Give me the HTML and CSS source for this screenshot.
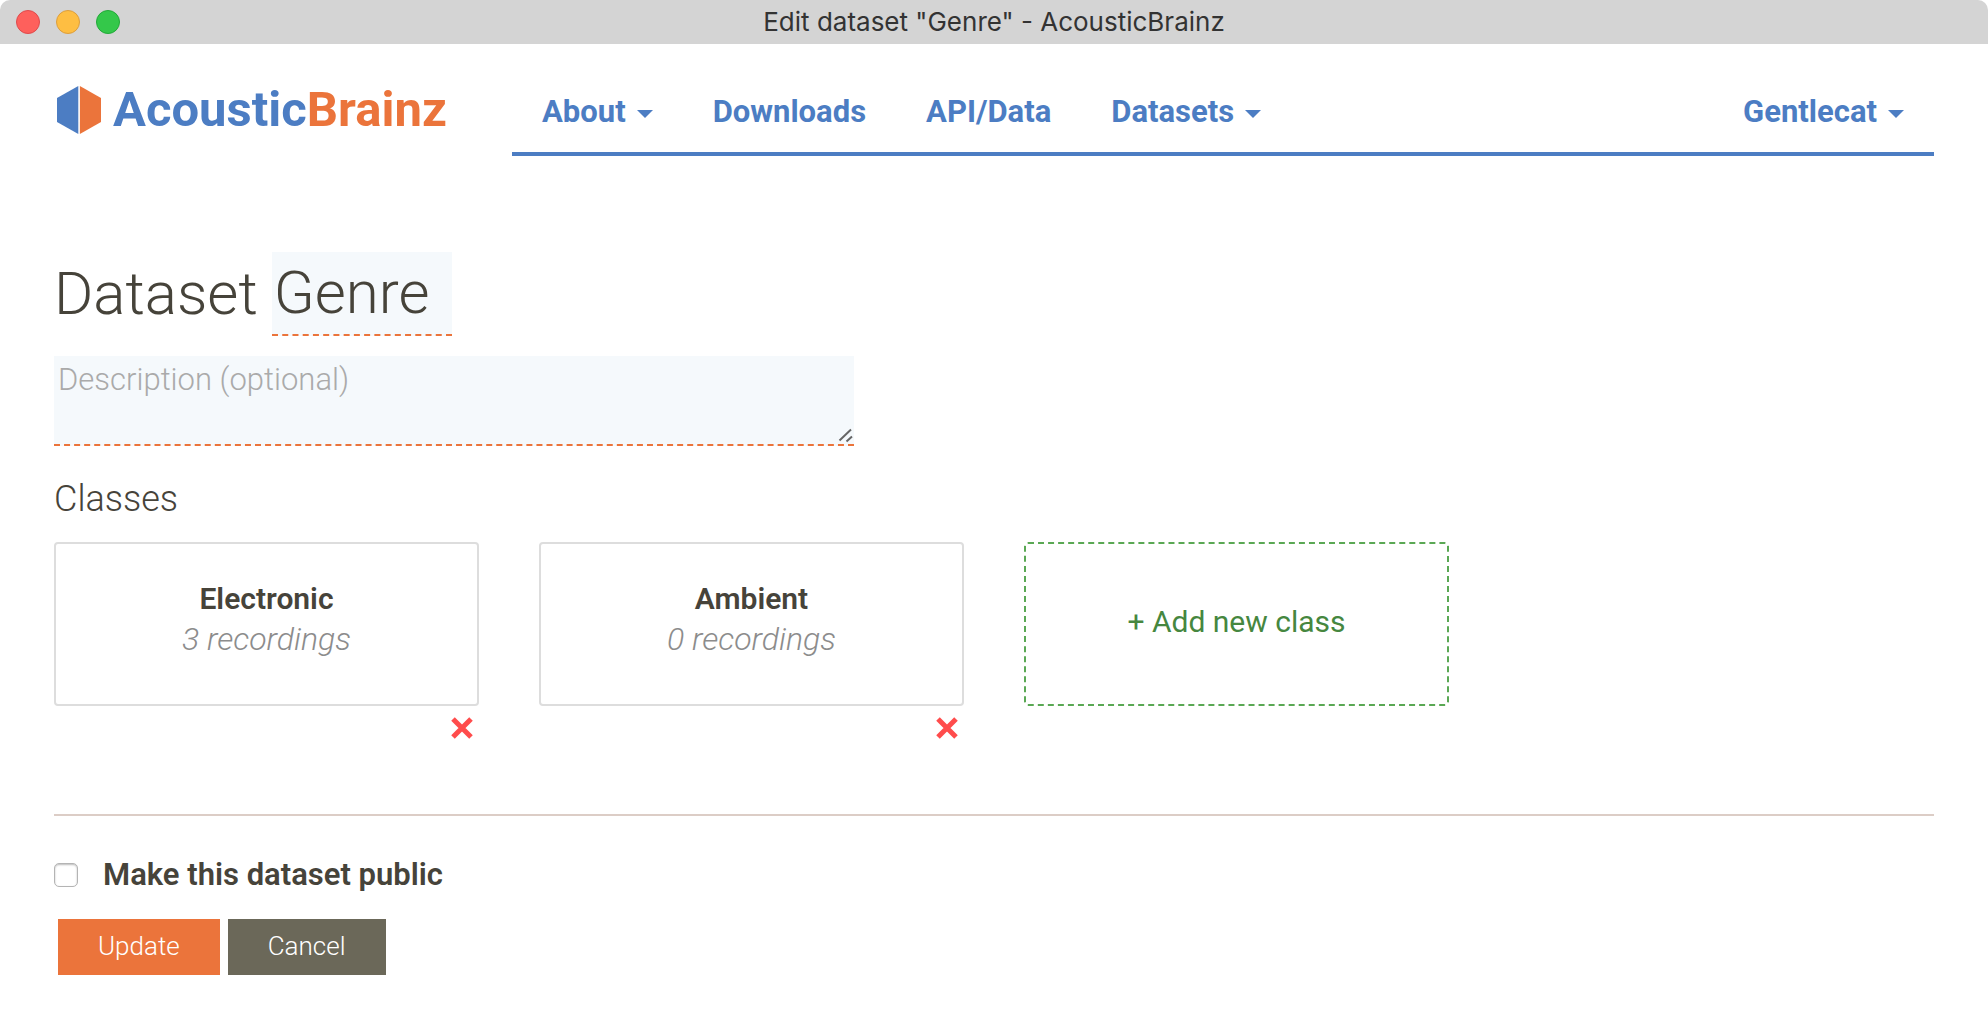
FILE: index.html
```html
<!DOCTYPE html>
<html lang="en">
<head>
<meta charset="utf-8">
<title>Edit dataset "Genre" - AcousticBrainz</title>
<link rel="stylesheet" href="styles.css">
</head>
<body>
<div class="titlebar">
  <div class="lights">
    <span class="light light-close"></span>
    <span class="light light-minimize"></span>
    <span class="light light-zoom"></span>
  </div>
  <div class="window-title">Edit dataset "Genre" - AcousticBrainz</div>
</div>

<div class="page">
  <header class="header">
    <a class="brand" href="#">
      <svg class="brand-mark" viewBox="0 0 44 48" aria-hidden="true">
        <path class="mark-blue" d="M21.3 0V48L0 36V12Z"/>
        <path class="mark-orange" d="M22.9 0V48L44 36V12Z"/>
      </svg>
      <span class="brand-name">Acoustic<span class="brand-accent">Brainz</span></span>
    </a>
    <nav class="nav">
      <a class="nav-link" href="#">About <span class="caret"></span></a>
      <a class="nav-link" href="#">Downloads</a>
      <a class="nav-link" href="#">API/Data</a>
      <a class="nav-link" href="#">Datasets <span class="caret"></span></a>
      <a class="nav-link nav-user" href="#">Gentlecat <span class="caret"></span></a>
    </nav>
  </header>

  <form class="editor">
    <h1 class="heading">
      <label for="name">Dataset</label>
      <input class="name-input" id="name" type="text" value="Genre">
    </h1>
    <div class="description-field">
      <textarea class="description" aria-label="Description" placeholder="Description (optional)"></textarea>
      <svg class="grip" viewBox="0 0 16 16" aria-hidden="true"><path d="M1.5 12.5L13 1.5M8.5 13.5L14 8.5"/></svg>
    </div>

    <h2 class="subheading">Classes</h2>
    <div class="classes">
      <div class="class">
        <a class="class-card" href="#">
          <span class="class-name">Electronic</span>
          <span class="class-count">3 recordings</span>
        </a>
        <button class="remove" type="button" aria-label="Remove Electronic">
          <svg class="remove-icon" viewBox="0 0 22 22"><path d="M2 2L20 20M20 2L2 20"/></svg>
        </button>
      </div>
      <div class="class">
        <a class="class-card" href="#">
          <span class="class-name">Ambient</span>
          <span class="class-count">0 recordings</span>
        </a>
        <button class="remove" type="button" aria-label="Remove Ambient">
          <svg class="remove-icon" viewBox="0 0 22 22"><path d="M2 2L20 20M20 2L2 20"/></svg>
        </button>
      </div>
      <div class="class">
        <button class="class-card class-add" type="button">+ Add new class</button>
      </div>
    </div>

    <hr class="divider">

    <label class="public"><input class="checkbox" type="checkbox">Make this dataset public</label>
    <div class="actions">
      <button class="button button-primary" type="submit">Update</button>
      <button class="button button-cancel" type="button">Cancel</button>
    </div>
  </form>
</div>
</body>
</html>
```

FILE: styles.css
```css
* {
  box-sizing: border-box;
}

body {
  margin: 0;
  background: #fff;
  color: #46433a;
  font: 300 31px/40px Roboto, "Liberation Sans", sans-serif;
}

a {
  color: inherit;
  text-decoration: none;
}

/* Window title bar */
.titlebar {
  display: grid;
  grid-template-columns: 1fr auto 1fr;
  align-items: center;
  height: 44px;
  padding: 0 16px;
  border-radius: 10px 10px 0 0;
  background: #d4d4d4;
}

.lights {
  display: flex;
  gap: 16px;
}

.light {
  width: 24px;
  height: 24px;
  border: 1px solid;
  border-radius: 50%;
}

.light-close {
  border-color: #e04a4c;
  background: #fe605c;
}

.light-minimize {
  border-color: #dd9e3c;
  background: #febe42;
}

.light-zoom {
  border-color: #22a938;
  background: #34c84a;
}

.window-title {
  color: #333;
  font: 400 26px/44px Inter, sans-serif;
}

/* Header */
.page {
  padding: 0 54px;
}

.header {
  display: grid;
  grid-template-columns: 458px 1fr;
  height: 112px;
}

.brand {
  display: flex;
  align-items: center;
  gap: 12px;
  height: 48px;
  margin: 42px 0 0 3px;
  color: #4c7dc3;
  font-size: 49px;
  font-weight: 700;
}

.brand-mark {
  width: 44px;
  height: 48px;
}

.mark-blue {
  fill: #4c7dc3;
}

.mark-orange {
  fill: #eb743b;
}

.brand-accent {
  color: #eb743b;
}

.nav {
  display: flex;
  gap: 60px;
  padding: 48px 30px 0;
  border-bottom: 4px solid #4c7dc3;
  color: #4c7dc3;
  font-weight: 700;
}

.nav-link {
  display: flex;
  align-items: center;
  gap: 11px;
  height: 40px;
}

.nav-user {
  margin-left: auto;
}

.caret {
  margin-top: 4px;
  border: 8px solid transparent;
  border-top-color: currentColor;
  border-bottom: 0;
}

/* Dataset fields */
.heading {
  display: flex;
  align-items: center;
  gap: 14px;
  height: 84px;
  margin: 96px 0 20px;
  font-size: 60px;
  font-weight: 300;
}

.name-input,
.description {
  border: 0;
  border-bottom: 2px dashed #eb743b;
  border-radius: 0;
  outline: 0;
  background: #f5f9fc;
  color: inherit;
  font: inherit;
}

.name-input {
  width: 180px;
  height: 84px;
  padding: 0 2px 2px;
}

.description-field {
  position: relative;
  width: fit-content;
  max-width: 100%;
}

.description {
  display: block;
  width: 800px;
  max-width: 100%;
  height: 90px;
  padding: 4px;
}

.description::placeholder {
  color: #aaa;
}

.description::-webkit-resizer {
  display: none;
}

.grip {
  position: absolute;
  right: 0;
  bottom: 2px;
  width: 16px;
  height: 16px;
  fill: none;
  stroke: #666;
  stroke-width: 2;
  pointer-events: none;
}

.subheading {
  margin: 32px 0 22px;
  font-size: 36px;
  font-weight: 300;
  line-height: 42px;
}

/* Class cards */
.classes {
  display: grid;
  grid-template-columns: repeat(4, 1fr);
  gap: 60px;
}

.class {
  display: flex;
  flex-direction: column;
  height: 212px;
}

.class-card {
  display: flex;
  flex-direction: column;
  align-items: center;
  height: 164px;
  padding-top: 35px;
  border: 2px solid #ddd;
  border-radius: 4px;
}

.class-name {
  font-size: 30px;
  font-weight: 600;
}

.class-count {
  color: #8c8c8c;
  font-size: 32px;
  font-style: italic;
}

.class-add {
  justify-content: center;
  padding: 0 0 4px;
  border: 2px dashed #5aa854;
  background: none;
  color: #46873f;
  font: inherit;
  font-size: 30px;
  font-weight: 400;
}

.remove {
  align-self: flex-end;
  margin: 11px 6px 0 0;
  padding: 0;
  border: 0;
  background: none;
  line-height: 0;
}

.remove-icon {
  width: 22px;
  height: 22px;
  fill: none;
  stroke: #ff4c4c;
  stroke-width: 5;
}

.divider {
  height: 2px;
  margin: 60px 0 39px;
  border: 0;
  background: #dccdc6;
}

/* Form footer */
.public {
  display: flex;
  align-items: center;
  gap: 25px;
  font-weight: 600;
}

.checkbox {
  appearance: none;
  width: 24px;
  height: 24px;
  margin: 0;
  border: 1px solid #b4b4b4;
  border-radius: 5px;
  background: #fff;
  box-shadow: inset 0 1px 2px #bbb;
}

.actions {
  display: flex;
  gap: 8px;
  padding: 24px 4px;
}

.button {
  height: 56px;
  padding: 0 40px 2px;
  border: 0;
  color: #fff;
  font: 300 26px/54px Roboto, "Liberation Sans", sans-serif;
}

.button-primary {
  background: #eb743b;
}

.button-cancel {
  background: #6b6859;
}
```
